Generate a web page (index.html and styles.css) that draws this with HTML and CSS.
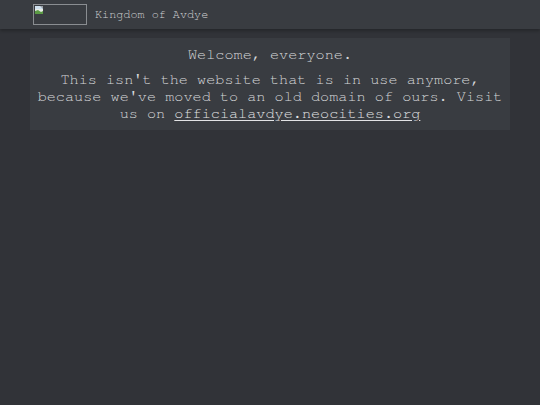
FILE: index.html
```html
<!DOCTYPE html>
<html>
<head>
<meta charset="utf-8">
<title>Kingdom of Avdye</title>
<link rel="stylesheet" href="styles.css">
</head>
<body>
<header class="topbar">
  <div class="logo" role="img" aria-label="logo">
    <svg class="broken" width="8" height="8" viewBox="0 0 8 8">
      <rect x="0" y="0" width="8" height="8" fill="#e8ece8"/>
      <rect x="0" y="0" width="8" height="3" fill="#cfe0ee"/>
      <path d="M0 8 L0 5 L3 4 L6 6 L8 5 L8 8 Z" fill="#5b9a45"/>
      <path d="M5 0 L8 0 L8 3 Z" fill="#9aa0a6"/>
    </svg>
  </div>
  <span class="site-name">Kingdom of Avdye</span>
</header>
<main class="content">
  <section class="notice">
    <p class="welcome">Welcome, everyone.</p>
    <p class="message">This isn't the website that is in use anymore, because we've moved to an old domain of ours. Visit us on <a href="#" class="link">officialavdye.neocities.org</a></p>
  </section>
</main>
</body>
</html>
```

FILE: styles.css
```css
html, body {
  margin: 0;
  padding: 0;
}
body {
  background: #313338;
  color: #d6d7d9;
  font-family: "Nimbus Mono PS", "Nimbus Mono L", FreeMono, Courier, "Courier New", "Liberation Mono", monospace;
  min-height: 405px;
}
.topbar {
  height: 29px;
  background: #393c41;
  display: flex;
  align-items: center;
  padding-left: 33px;
  gap: 8px;
  box-shadow: 0 2px 3px rgba(0, 0, 0, 0.25);
  position: relative;
}
.logo {
  width: 52px;
  height: 19px;
  border: 1px solid #8a8d91;
  position: relative;
}
.broken {
  position: absolute;
  left: 1px;
  top: 1px;
}
.site-name {
  font-size: 11.8px;
  color: #d0d1d3;
  line-height: 14px;
}
.content {
  padding: 9px 30px 0;
}
.notice {
  background: #393c41;
  padding: 8px 6px;
  text-align: center;
  font-size: 15.2px;
  line-height: 17px;
}
.notice p {
  margin: 0;
}
.notice .message {
  margin-top: 8px;
}
.link {
  color: #e2e3e5;
  text-decoration: underline;
  text-underline-offset: 2px;
}
```
